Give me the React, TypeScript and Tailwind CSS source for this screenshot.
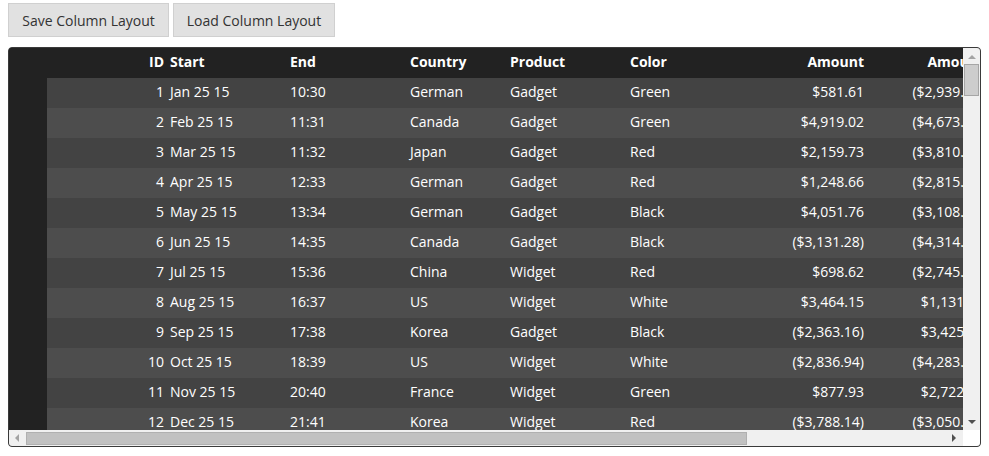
import React from "react";

const rows: string[][] = [
  ["1", "Jan 25 15", "10:30", "German", "Gadget", "Green", "$581.61", "($2,939.61)"],
  ["2", "Feb 25 15", "11:31", "Canada", "Gadget", "Green", "$4,919.02", "($4,673.15)"],
  ["3", "Mar 25 15", "11:32", "Japan", "Gadget", "Red", "$2,159.73", "($3,810.48)"],
  ["4", "Apr 25 15", "12:33", "German", "Gadget", "Red", "$1,248.66", "($2,815.27)"],
  ["5", "May 25 15", "13:34", "German", "Gadget", "Black", "$4,051.76", "($3,108.39)"],
  ["6", "Jun 25 15", "14:35", "Canada", "Gadget", "Black", "($3,131.28)", "($4,314.50)"],
  ["7", "Jul 25 15", "15:36", "China", "Widget", "Red", "$698.62", "($2,745.82)"],
  ["8", "Aug 25 15", "16:37", "US", "Widget", "White", "$3,464.15", "$1,131.94"],
  ["9", "Sep 25 15", "17:38", "Korea", "Gadget", "Black", "($2,363.16)", "$3,425.07"],
  ["10", "Oct 25 15", "18:39", "US", "Widget", "White", "($2,836.94)", "($4,283.71)"],
  ["11", "Nov 25 15", "20:40", "France", "Widget", "Green", "$877.93", "$2,722.36"],
  ["12", "Dec 25 15", "21:41", "Korea", "Widget", "Red", "($3,788.14)", "($3,050.69)"],
];

const headers = ["ID", "Start", "End", "Country", "Product", "Color", "Amount", "Amount2"];
const widths = ["w-[120px]", "w-[120px]", "w-[120px]", "w-[100px]", "w-[120px]", "w-[120px]", "w-[120px]", "w-[120px]"];
const right = [true, false, false, false, false, false, true, true];

function Cell({ i, text, bold }: { i: number; text: string; bold?: boolean }) {
  return (
    <div
      className={`${widths[i]} shrink-0 h-full flex items-center px-[3px] pb-[4px] overflow-hidden whitespace-nowrap ${
        right[i] ? "justify-end" : "justify-start"
      } ${bold ? "font-bold" : ""}`}
    >
      {text}
    </div>
  );
}

export default function App() {
  return (
    <div
      className="w-[989px] h-[456px] bg-white px-2 pt-[3px]"
      style={{ fontFamily: '"Open Sans", "Noto Sans", sans-serif' }}
    >
      <div className="flex gap-1 h-[34px]">
        <button className="h-[34px] px-3 bg-[#e1e1e1] border border-[#d0d0d0] text-[14px] text-[#333] w-[161px]">
          Save Column Layout
        </button>
        <button className="h-[34px] px-3 bg-[#e1e1e1] border border-[#d0d0d0] text-[14px] text-[#333] w-[162px]">
          Load Column Layout
        </button>
      </div>
      <div className="mt-[10px] w-[973px] h-[400px] border border-[#3a3a3a] rounded-[4px] overflow-hidden flex flex-col bg-[#222] text-white text-[14px]">
        <div className="flex flex-1 min-h-0">
          <div className="flex-1 min-w-0 overflow-hidden flex flex-col">
            <div className="flex h-[30px] shrink-0 bg-[#222]">
              <div className="w-[38px] shrink-0" />
              {headers.map((h, i) => (
                <Cell key={i} i={i} text={h === "Amount2" ? "Amount" : h} bold />
              ))}
            </div>
            {rows.map((r, ri) => (
              <div key={ri} className="flex h-[30px] shrink-0">
                <div className="w-[38px] shrink-0 bg-[#222]" />
                <div className={`flex h-full ${ri % 2 === 0 ? "bg-[#434343]" : "bg-[#4d4d4d]"}`}>
                  {r.map((c, i) => (
                    <Cell key={i} i={i} text={c} />
                  ))}
                </div>
              </div>
            ))}
          </div>
          <div className="w-[17px] shrink-0 bg-[#f0f0f0] flex flex-col">
            <div className="h-[16px] flex items-center justify-center">
              <svg width="8" height="5" viewBox="0 0 8 5"><path d="M0 5 L4 1 L8 5 Z" fill="#a3a3a3" /></svg>
            </div>
            <div className="h-[32px] mx-[1px] bg-[#cdcdcd] border border-[#a6a6a6]" />
            <div className="flex-1" />
            <div className="h-[16px] flex items-center justify-center">
              <svg width="8" height="5" viewBox="0 0 8 5"><path d="M0 0 L8 0 L4 4 Z" fill="#505050" /></svg>
            </div>
          </div>
        </div>
        <div className="flex h-[16px] shrink-0">
          <div className="flex-1 bg-[#f0f0f0] flex items-center">
            <div className="w-[17px] h-full flex items-center justify-center">
              <svg width="5" height="8" viewBox="0 0 5 8"><path d="M4 0 L4 8 L0 4 Z" fill="#a3a3a3" /></svg>
            </div>
            <div className="w-[721px] h-[13px] bg-[#c1c1c1] border border-[#b0b0b0]" />
            <div className="flex-1" />
            <div className="w-[17px] h-full flex items-center justify-center">
              <svg width="5" height="8" viewBox="0 0 5 8"><path d="M0 0 L4 4 L0 8 Z" fill="#505050" /></svg>
            </div>
          </div>
          <div className="w-[17px] bg-white" />
        </div>
      </div>
    </div>
  );
}
